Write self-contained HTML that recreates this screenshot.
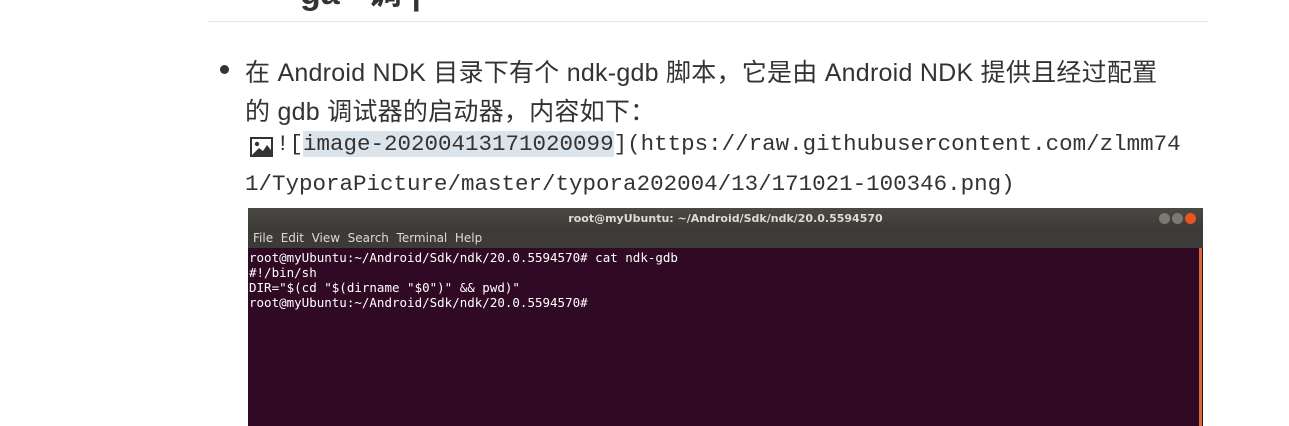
<!DOCTYPE html>
<html><head><meta charset="utf-8"><style>
body{margin:0;width:1289px;height:426px;overflow:hidden;background:#fff;position:relative;font-family:"Liberation Sans","Noto Sans CJK SC",sans-serif;color:#333}
.hr{position:absolute;left:208px;top:21px;width:1000px;height:1px;background:#e8e8e8}
.t{position:absolute;white-space:nowrap}
.cn{font-size:25px;letter-spacing:0.25px;color:#333}
.mono{font-family:"Liberation Mono","DejaVu Sans Mono",monospace;font-size:22.5px;color:#333}
.hl{background:#dbe3eb}
.term{position:absolute;left:248px;top:208px;width:955px;height:218px;background:#300a24}
.tb{position:absolute;left:0;top:0;width:955px;height:21px;background:linear-gradient(#4a4944,#3c3b37);color:#dfdbd2;font:bold 11px "DejaVu Sans",sans-serif;text-align:center;line-height:21px}
.mb{position:absolute;left:0;top:21px;width:955px;height:19px;background:#3c3b37;color:#dfdbd2;font:12px "DejaVu Sans",sans-serif;line-height:19px;padding-left:5px;box-sizing:border-box}
.body{position:absolute;left:1px;top:42px;color:#fff;font:12.5px/15px "DejaVu Sans Mono",monospace;white-space:pre}
.sb{position:absolute;right:1px;top:40px;width:3px;height:178px;background:#d86a3a}
.btn{position:absolute;top:5px;width:11px;height:11px;border-radius:50%;background:#7a7974}
</style></head><body>
<div class="t" style="left:300px;top:-35px;font-size:34px;font-weight:bold;color:#333">ga &nbsp; 调 |</div>
<div class="hr"></div>
<div style="position:absolute;left:220px;top:65px;width:9px;height:9px;border-radius:50%;background:#333"></div>
<div class="t cn" style="left:245px;top:53px">在 Android NDK 目录下有个 ndk-gdb 脚本，它是由 Android NDK 提供且经过配置</div>
<div class="t cn" style="left:245px;top:92px">的 gdb 调试器的启动器，内容如下：</div>
<svg style="position:absolute;left:250px;top:137px" width="23" height="20" viewBox="0 0 23 20"><rect x="1" y="1" width="21" height="18" fill="none" stroke="#333" stroke-width="2"/><circle cx="7" cy="7" r="2.2" fill="#333"/><path d="M2 18 L9 11 L13 14 L17 8 L21 13 L21 18 Z" fill="#333"/></svg>
<div class="t mono" style="left:276px;top:131px">![<span class="hl">image-20200413171020099</span>](https://raw.githubusercontent.com/zlmm74</div>
<div class="t mono" style="left:245px;top:171px">1/TyporaPicture/master/typora202004/13/171021-100346.png)</div>
<div class="term">
<div class="tb">root@myUbuntu: ~/Android/Sdk/ndk/20.0.5594570</div>
<div class="btn" style="left:911px"></div><div class="btn" style="left:924px"></div><div class="btn" style="left:937px;background:#e9541f"></div>
<div class="mb">File &nbsp;Edit &nbsp;View &nbsp;Search &nbsp;Terminal &nbsp;Help</div>
<div class="body">root@myUbuntu:~/Android/Sdk/ndk/20.0.5594570# cat ndk-gdb
#!/bin/sh
DIR="$(cd "$(dirname "$0")" &amp;&amp; pwd)"
root@myUbuntu:~/Android/Sdk/ndk/20.0.5594570#</div>
<div class="sb"></div>
</div>
</body></html>
